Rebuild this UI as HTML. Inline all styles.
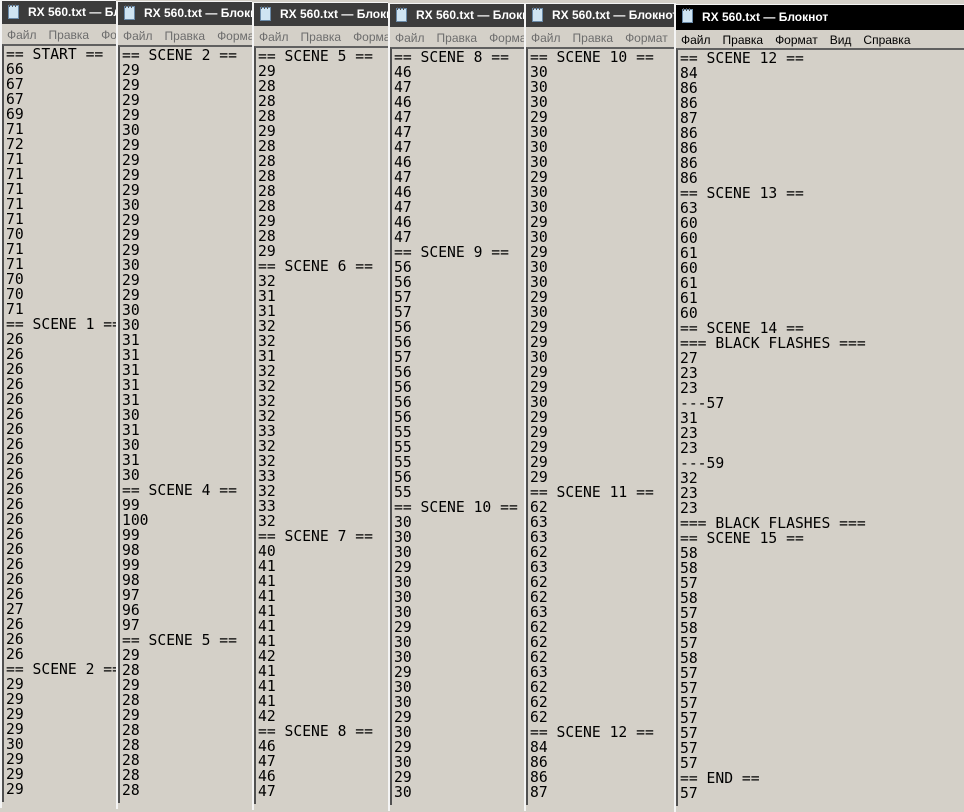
<!DOCTYPE html>
<html><head><meta charset="utf-8"><style>
body{margin:0;width:964px;height:812px;background:#d4d0c8;position:relative;overflow:hidden}
.w{position:absolute;background:#d4d0c8;overflow:hidden;border-left:2px solid #f4f4f4;border-top:1px solid #f4f4f4;box-sizing:border-box}
.t{height:23px;background:#3c3c3c;color:#fff;font:bold 12px "Liberation Sans",sans-serif;line-height:23px;white-space:nowrap;padding-left:26px;position:relative}
.t i{position:absolute;left:6px;top:4px;width:11px;height:14px;background:#cfe4f2;border:1px solid #6a8aa8;box-sizing:border-box}
.t i:before{content:"";position:absolute;left:0;right:0;top:-2px;height:3px;background:repeating-linear-gradient(90deg,#555 0 1px,transparent 1px 3px)}
.a .t{background:#000;height:25px;line-height:25px}
.m{height:22px;font:12px "Liberation Sans","DejaVu Sans",sans-serif;color:#6d6d6d;line-height:22px;white-space:nowrap;padding-left:5px}
.m span{margin-right:12px}
.a .m{color:#000;height:20px;line-height:20px}
.e{position:absolute;left:0;right:0;top:43px;bottom:6px;border-left:2px solid #505050;border-top:2px solid #606060;padding:1px 0 0 2px;font:14.7px "DejaVu Sans Mono",monospace;line-height:15px;white-space:pre;color:#000;overflow:hidden}
</style></head><body>

<div class="w" style="left:0;top:0;width:116px;height:808px">
<div class="t"><i></i>RX 560.txt — Блокнот</div>
<div class="m"><span>Файл</span><span>Правка</span><span>Формат</span></div>
<div class="e">== START ==
66
67
67
69
71
72
71
71
71
71
71
70
71
71
70
70
71
== SCENE 1 ==
26
26
26
26
26
26
26
26
26
26
26
26
26
26
26
26
26
26
27
26
26
26
== SCENE 2 ==
29
29
29
29
30
29
29
29</div></div>

<div class="w" style="left:116px;top:1px;width:136px;height:808px">
<div class="t"><i></i>RX 560.txt — Блокнот</div>
<div class="m"><span>Файл</span><span>Правка</span><span>Формат</span></div>
<div class="e">== SCENE 2 ==
29
29
29
29
30
29
29
29
29
30
29
29
29
30
29
29
30
30
31
31
31
31
31
30
31
30
31
30
== SCENE 4 ==
99
100
99
98
99
98
97
96
97
== SCENE 5 ==
29
28
29
28
29
28
28
28
28
28</div></div>

<div class="w" style="left:252px;top:2px;width:136px;height:808px">
<div class="t"><i></i>RX 560.txt — Блокнот</div>
<div class="m"><span>Файл</span><span>Правка</span><span>Формат</span></div>
<div class="e">== SCENE 5 ==
29
28
28
28
29
28
28
28
28
28
29
28
29
== SCENE 6 ==
32
31
31
32
32
31
32
32
32
32
33
32
32
33
32
33
32
== SCENE 7 ==
40
41
41
41
41
41
41
42
41
41
41
42
== SCENE 8 ==
46
47
46
47</div></div>

<div class="w" style="left:388px;top:3px;width:136px;height:808px">
<div class="t"><i></i>RX 560.txt — Блокнот</div>
<div class="m"><span>Файл</span><span>Правка</span><span>Формат</span></div>
<div class="e">== SCENE 8 ==
46
47
46
47
47
47
46
47
46
47
46
47
== SCENE 9 ==
56
56
57
57
56
56
57
56
56
56
56
55
55
55
56
55
== SCENE 10 ==
30
30
30
29
30
30
30
29
30
30
29
30
30
29
30
29
30
29
30</div></div>

<div class="w" style="left:524px;top:3px;width:152px;height:808px">
<div class="t"><i></i>RX 560.txt — Блокнот</div>
<div class="m"><span>Файл</span><span>Правка</span><span>Формат</span><span>Вид</span></div>
<div class="e">== SCENE 10 ==
30
30
30
29
30
30
30
29
30
30
29
30
29
30
30
29
30
29
29
30
29
29
30
29
29
29
29
29
== SCENE 11 ==
62
63
63
62
63
62
62
63
62
62
62
63
62
62
62
== SCENE 12 ==
84
86
86
87</div></div>

<div class="w a" style="left:674px;top:4px;width:290px;height:808px">
<div class="t"><i></i>RX 560.txt — Блокнот</div>
<div class="m"><span>Файл</span><span>Правка</span><span>Формат</span><span>Вид</span><span>Справка</span></div>
<div class="e">== SCENE 12 ==
84
86
86
87
86
86
86
86
== SCENE 13 ==
63
60
60
61
60
61
61
60
== SCENE 14 ==
=== BLACK FLASHES ===
27
23
23
---57
31
23
23
---59
32
23
23
=== BLACK FLASHES ===
== SCENE 15 ==
58
58
57
58
57
58
57
58
57
57
57
57
57
57
57
== END ==
57</div></div>

</body></html>
